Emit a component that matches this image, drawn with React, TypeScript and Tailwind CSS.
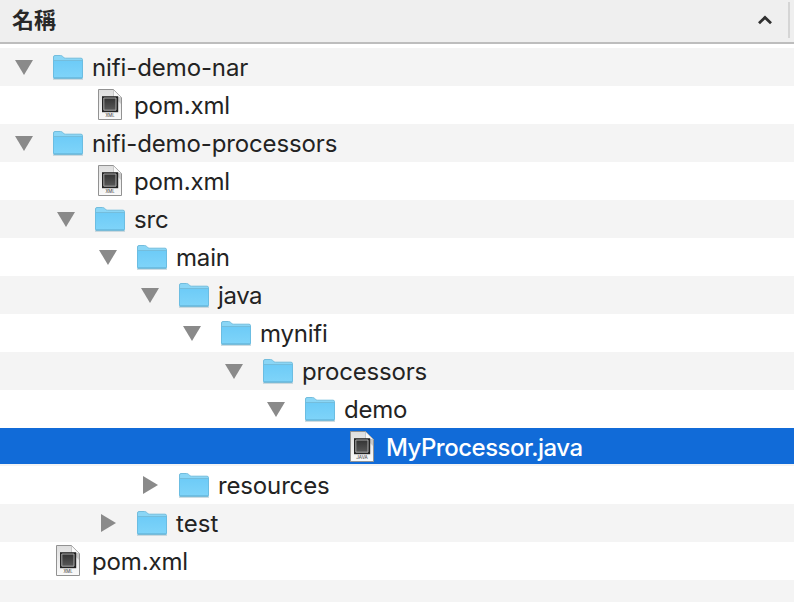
type Kind = "folder" | "xml" | "java";

interface Entry {
  name: string;
  kind: Kind;
  pad: string;
  arrow?: "open" | "closed";
  tracking: string;
  selected?: boolean;
}

const entries: Entry[] = [
  { name: "nifi-demo-nar", kind: "folder", pad: "pl-[14px]", arrow: "open", tracking: "tracking-[-0.1px]" },
  { name: "pom.xml", kind: "xml", pad: "pl-[56px]", tracking: "tracking-[-0.15px]" },
  { name: "nifi-demo-processors", kind: "folder", pad: "pl-[14px]", arrow: "open", tracking: "tracking-[-0.12px]" },
  { name: "pom.xml", kind: "xml", pad: "pl-[56px]", tracking: "tracking-[-0.15px]" },
  { name: "src", kind: "folder", pad: "pl-[56px]", arrow: "open", tracking: "tracking-[-0.1px]" },
  { name: "main", kind: "folder", pad: "pl-[98px]", arrow: "open", tracking: "tracking-[-0.15px]" },
  { name: "java", kind: "folder", pad: "pl-[140px]", arrow: "open", tracking: "tracking-[-0.4px]" },
  { name: "mynifi", kind: "folder", pad: "pl-[182px]", arrow: "open", tracking: "tracking-[-0.2px]" },
  { name: "processors", kind: "folder", pad: "pl-[224px]", arrow: "open", tracking: "tracking-[-0.18px]" },
  { name: "demo", kind: "folder", pad: "pl-[266px]", arrow: "open", tracking: "tracking-[-0.25px]" },
  { name: "MyProcessor.java", kind: "java", pad: "pl-[308px]", tracking: "tracking-[-0.5px]", selected: true },
  { name: "resources", kind: "folder", pad: "pl-[140px]", arrow: "closed", tracking: "tracking-[-0.15px]" },
  { name: "test", kind: "folder", pad: "pl-[98px]", arrow: "closed", tracking: "tracking-[0.1px]" },
  { name: "pom.xml", kind: "xml", pad: "pl-[14px]", tracking: "tracking-[-0.15px]" },
];

function Arrow({ state }: { state?: "open" | "closed" }) {
  return (
    <svg width="38" height="38" viewBox="0 0 38 38" className="shrink-0">
      {state === "open" && <path d="M1 12H19L10 27Z" fill="#8a8a8a" />}
      {state === "closed" && <path d="M3 10V28L18 19Z" fill="#8a8a8a" />}
    </svg>
  );
}

function FolderIcon() {
  return (
    <svg width="32" height="38" viewBox="0 0 32 38" className="shrink-0">
      <defs>
        <linearGradient id="folder" x1="0" y1="0" x2="0" y2="1">
          <stop offset="0" stopColor="#6dcbf7" />
          <stop offset="1" stopColor="#7fd4f9" />
        </linearGradient>
      </defs>
      <path d="M1 31H31" stroke="#b9cdd6" strokeWidth="1.4" />
      <path
        d="M1.5 9Q1.5 7.5 3 7.5H8.5Q9.7 7.5 10.6 8.4L11.8 9.5Q12.6 10.2 13.7 10.2H29Q30.5 10.2 30.5 11.7V30H1.5Z"
        fill="#8ad6f6"
        stroke="#73bddd"
      />
      <path d="M1.5 12.5H30.5V29.3Q30.5 30.3 29.5 30.3H2.5Q1.5 30.3 1.5 29.3Z" fill="url(#folder)" />
      <path d="M1.5 12.5H30.5" stroke="#74bddc" />
      <path d="M1.5 12V29M30.5 12V29" stroke="#6bbde2" />
      <path d="M2 30H30" stroke="#5ba9cc" />
    </svg>
  );
}

function FileIcon({ label }: { label: string }) {
  return (
    <svg width="32" height="38" viewBox="0 0 32 38" className="shrink-0">
      <defs>
        <linearGradient id="paper" x1="0" y1="0" x2="0" y2="1">
          <stop offset="0" stopColor="#dedede" />
          <stop offset="1" stopColor="#fafafa" />
        </linearGradient>
        <linearGradient id="chip" x1="0" y1="0" x2="0" y2="1">
          <stop offset="0" stopColor="#333" />
          <stop offset="1" stopColor="#585858" />
        </linearGradient>
      </defs>
      <path d="M4.5 3.5H19.5L27.5 11.5V33.5H4.5Z" fill="url(#paper)" stroke="#929292" />
      <path d="M20.5 11.5H27V18Z" fill="#c9c9c9" />
      <path d="M19.5 3.7L27.3 11.5H20.5Q19.5 11.5 19.5 10.5Z" fill="#fafafa" stroke="#b0b0b0" strokeWidth="0.6" />
      <path d="M8 10.2H24.2V26.2H8Z" fill="#232323" />
      <path d="M9.8 12H22V24.2H9.8Z" fill="url(#chip)" stroke="#b5b5b5" strokeWidth="0.9" />
      <text
        x="16"
        y="31.2"
        textAnchor="middle"
        textLength={label === "JAVA" ? 11.4 : 9.2}
        lengthAdjust="spacingAndGlyphs"
        fontSize="4.5"
        fill="#333"
        className="font-['Inter',sans-serif]"
      >
        {label}
      </text>
    </svg>
  );
}

function Row({ entry, index }: { entry: Entry; index: number }) {
  const stripe = index % 2 === 0 ? "bg-[#f4f4f4]" : "bg-white";
  return (
    <div className={`h-[38px] shrink-0 ${stripe}`}>
      <div
        className={`flex items-start ${entry.pad} ${
          entry.selected ? "h-9 bg-[#116bd8] text-white" : "h-[38px] text-[#232323]"
        }`}
      >
        <Arrow state={entry.arrow} />
        {entry.kind === "folder" ? <FolderIcon /> : <FileIcon label={entry.kind.toUpperCase()} />}
        <span
          className={`ml-2 whitespace-nowrap text-[24px] leading-[40px] ${entry.tracking} ${
            entry.selected ? "font-medium" : "font-normal"
          }`}
        >
          {entry.name}
        </span>
      </div>
    </div>
  );
}

export default function App() {
  return (
    <div className="flex h-[602px] w-[794px] flex-col overflow-hidden bg-white font-['Inter','Noto_Sans_CJK_TC',sans-serif]">
      <header className="mb-1 flex h-11 shrink-0 items-start border-b-2 border-[#bdbdbd] bg-[#efefef] pl-3">
        <span className="text-[22px] leading-[36px] font-bold text-[#282828] font-['Noto_Sans_CJK_TC',sans-serif]">
          名稱
        </span>
        <svg width="16" height="10" viewBox="0 0 16 10" className="mt-[15px] mr-[15px] ml-auto">
          <path d="M2 8.2L8 2.4L14 8.2" fill="none" stroke="#303030" strokeWidth="2.8" />
        </svg>
        <div className="mt-0.5 mr-1 h-9 w-0.5 bg-[#d5d5d5]" />
      </header>
      <main className="flex min-h-0 flex-1 flex-col overflow-hidden">
        {entries.map((entry, i) => (
          <Row key={i} entry={entry} index={i} />
        ))}
        <div className="flex-1 bg-[#f4f4f4]" />
      </main>
    </div>
  );
}
